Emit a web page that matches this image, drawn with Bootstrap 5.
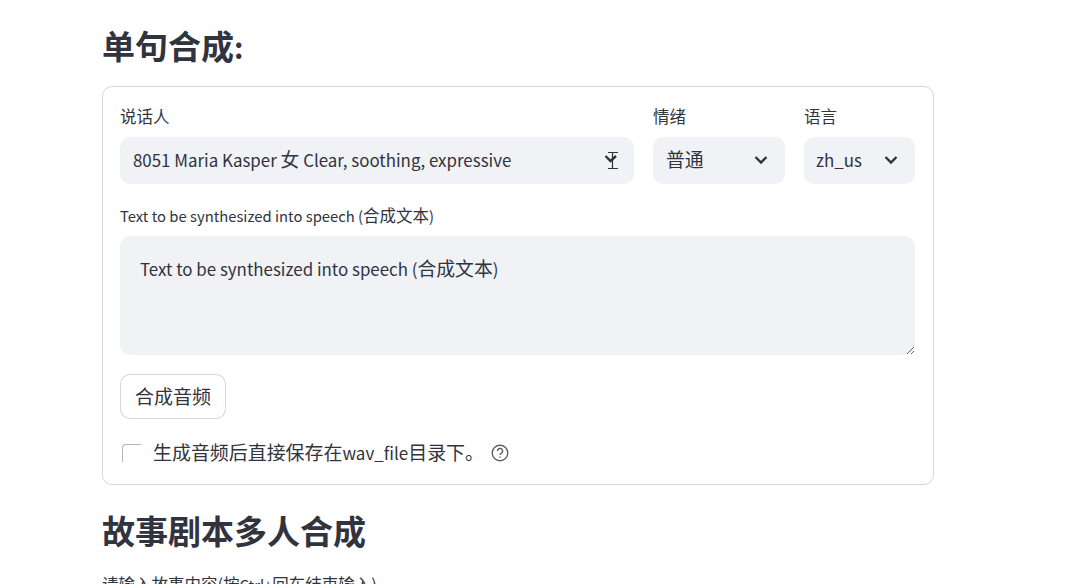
<!DOCTYPE html>
<html lang="zh">
<head>
  <meta charset="UTF-8" />
  <title>单句合成</title>
  <link rel="stylesheet" href="https://cdn.jsdelivr.net/npm/bootstrap@5.3.0/dist/css/bootstrap.min.css" />
  <style>
    html, body { height: 100%; overflow: hidden; }
    body {
      background: #fff;
      color: #31333f;
      font-family: "Noto Sans CJK SC", sans-serif;
    }
    .page-wrap { width: 832px; margin-left: 102px; padding-top: 22px; }
    .sec-title {
      font-family: "Noto Sans CJK SC", sans-serif;
      font-weight: 700;
      font-size: 33px;
      line-height: 47px;
      margin: 0;
      color: #31333f;
    }
    .sec-colon { font-size: .88em; line-height: 1; }
    /* latin glyphs run smaller than the CJK ones in the picture */
    .zh { font-size: 1.115em; line-height: 1; }
    .form-box {
      height: 399px;
      margin-top: 17px;
      padding: 18px 18px 0 17px;
      border: 1px solid rgba(49, 51, 63, .2);
      border-radius: 10px;
    }
    .field-label { font-size: 14.8px; line-height: 24px; margin-bottom: 8px; display: block; }
    .col-speaker { width: 514px; }
    .col-mood { width: 132px; }
    .col-lang { width: 111px; }
    .fake-select {
      height: 47px;
      background: #f0f2f6;
      border-radius: 10px;
      font-size: 16.9px;
      padding: 0 17px 2px 13px;
    }
    .col-speaker .fake-select { padding-right: 14px; }
    .col-lang .fake-select { padding-left: 12px; }
    .fake-select svg { flex: none; }
    .story-input.form-control {
      height: 119px;
      background: #f0f2f6;
      border: 0;
      border-radius: 10px;
      color: #31333f;
      font-size: 16.9px;
      line-height: 26px;
      padding: 20px;
      overflow: auto;
      resize: vertical;
    }
    .make-btn.btn {
      width: 106px;
      height: 45px;
      padding: 0;
      font-size: 19px;
      color: #31333f;
      border: 1px solid rgba(49, 51, 63, .2);
      border-radius: 10px;
      background: #fff;
    }
    .save-row { font-size: 17px; line-height: 28px; }
    .tick-box {
      width: 19px;
      height: 18px;
      margin: 0 12px 0 2px;
      border-top: 1px solid #b4b5ba;
      border-left: 1px solid #b4b5ba;
      border-top-left-radius: 4px;
    }
    .help-mark { margin-left: 6px; }
    .below-text { font-size: 14.8px; line-height: 24px; margin-top: 19px; }
  </style>
</head>
<body>
  <div class="page-wrap">
    <h3 class="sec-title">单句合成<span class="sec-colon">:</span></h3>

    <div class="form-box">
      <div class="d-flex" style="gap:19px">
        <div class="col-speaker">
          <label class="field-label"><span class="zh">说话人</span></label>
          <div class="fake-select d-flex align-items-center justify-content-between">
            <span>8051 Maria Kasper <span class="zh">女</span> Clear, soothing, expressive</span>
            <!-- chevron with the text cursor sitting on it -->
            <svg width="16" height="20" viewBox="0 0 16 20" fill="none" stroke="#31333f">
              <path d="M1.5 6 L6.5 11 L12 6" stroke-width="2.4"/>
              <path d="M4 2.5H14M8.5 2.5V18.5M4 18.5H14" stroke-width="1.2"/>
            </svg>
          </div>
        </div>
        <div class="col-mood">
          <label class="field-label"><span class="zh">情绪</span></label>
          <div class="fake-select d-flex align-items-center justify-content-between">
            <span class="zh">普通</span>
            <svg width="14" height="10" viewBox="0 0 14 10" fill="none" stroke="#31333f" stroke-width="2.4"><path d="M1.5 2 L7 7.5 L12.5 2"/></svg>
          </div>
        </div>
        <div class="col-lang">
          <label class="field-label"><span class="zh">语言</span></label>
          <div class="fake-select d-flex align-items-center justify-content-between">
            <span>zh_us</span>
            <svg width="14" height="10" viewBox="0 0 14 10" fill="none" stroke="#31333f" stroke-width="2.4"><path d="M1.5 2 L7 7.5 L12.5 2"/></svg>
          </div>
        </div>
      </div>

      <div style="margin-top:20px">
        <label class="field-label mb-2">Text to be synthesized into speech (<span class="zh">合成文本</span>)</label>
        <div class="story-input form-control">Text to be synthesized into speech (<span class="zh">合成文本</span>)</div>
      </div>

      <button type="button" class="make-btn btn d-block" style="margin-top:19px">合成音频</button>

      <div class="save-row d-flex align-items-center" style="margin-top:20px">
        <span class="tick-box"></span>
        <span><span class="zh">生成音频后直接保存在</span>wav_file<span class="zh">目录下。</span></span>
        <svg class="help-mark" width="20" height="20" viewBox="0 0 20 20" fill="none" stroke="#5f6068" stroke-width="1.4">
          <circle cx="10" cy="10" r="7.8"/>
          <path d="M7.6 8a2.5 2.5 0 1 1 3.7 2.2c-.8.5-1.3.9-1.3 1.9"/>
          <path d="M10 13.6v1.2"/>
        </svg>
      </div>
    </div>

    <h3 class="sec-title" style="margin-top:22px">故事剧本多人合成</h3>
    <div class="below-text"><span class="zh">请输入故事内容(按</span>Ctrl+<span class="zh">回车结束输入)</span></div>
  </div>
  <script src="https://cdn.jsdelivr.net/npm/bootstrap@5.3.0/dist/js/bootstrap.bundle.min.js"></script>
</body>
</html>
